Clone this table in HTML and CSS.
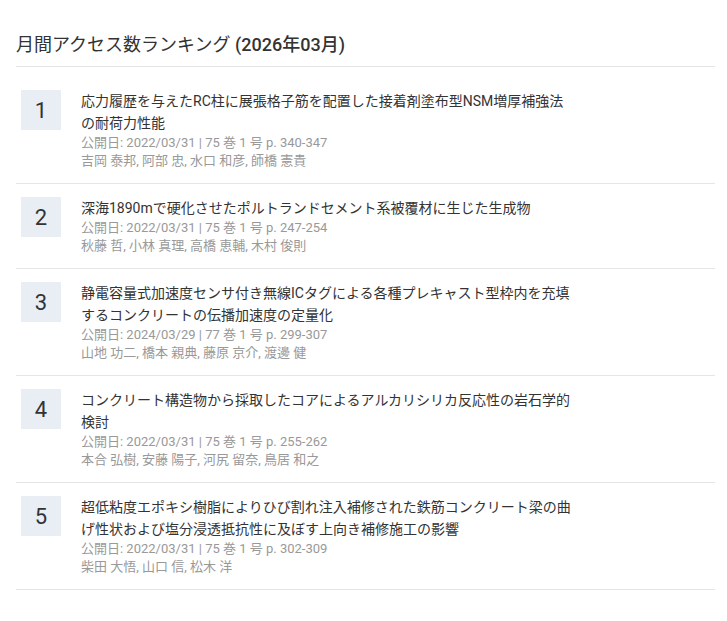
FILE: index.html
```html
<!DOCTYPE html>
<html lang="ja">
<head>
<meta charset="utf-8">
<link rel="stylesheet" href="styles.css">
</head>
<body>
<div class="ranking">
  <h2 class="ranking-title">月間アクセス数ランキング <span class="period">(2026年03月)</span></h2>
  <ol class="rank-list">
    <li class="rank-item">
      <div class="rank-num">1</div>
      <div class="rank-body">
        <div class="rank-head">応力履歴を与えたRC柱に展張格子筋を配置した接着剤塗布型NSM増厚補強法の耐荷力性能</div>
        <div class="rank-meta">公開日: 2022/03/31 | 75 巻 1 号 p. 340-347</div>
        <div class="rank-meta">吉岡 泰邦, 阿部 忠, 水口 和彦, 師橋 憲貴</div>
      </div>
    </li>
    <li class="rank-item">
      <div class="rank-num">2</div>
      <div class="rank-body">
        <div class="rank-head">深海1890mで硬化させたポルトランドセメント系被覆材に生じた生成物</div>
        <div class="rank-meta">公開日: 2022/03/31 | 75 巻 1 号 p. 247-254</div>
        <div class="rank-meta">秋藤 哲, 小林 真理, 高橋 恵輔, 木村 俊則</div>
      </div>
    </li>
    <li class="rank-item">
      <div class="rank-num">3</div>
      <div class="rank-body">
        <div class="rank-head">静電容量式加速度センサ付き無線ICタグによる各種プレキャスト型枠内を充填するコンクリートの伝播加速度の定量化</div>
        <div class="rank-meta">公開日: 2024/03/29 | 77 巻 1 号 p. 299-307</div>
        <div class="rank-meta">山地 功二, 橋本 親典, 藤原 京介, 渡邊 健</div>
      </div>
    </li>
    <li class="rank-item">
      <div class="rank-num">4</div>
      <div class="rank-body">
        <div class="rank-head">コンクリート構造物から採取したコアによるアルカリシリカ反応性の岩石学的検討</div>
        <div class="rank-meta">公開日: 2022/03/31 | 75 巻 1 号 p. 255-262</div>
        <div class="rank-meta">本合 弘樹, 安藤 陽子, 河尻 留奈, 鳥居 和之</div>
      </div>
    </li>
    <li class="rank-item">
      <div class="rank-num">5</div>
      <div class="rank-body">
        <div class="rank-head">超低粘度エポキシ樹脂によりひび割れ注入補修された鉄筋コンクリート梁の曲げ性状および塩分浸透抵抗性に及ぼす上向き補修施工の影響</div>
        <div class="rank-meta">公開日: 2022/03/31 | 75 巻 1 号 p. 302-309</div>
        <div class="rank-meta">柴田 大悟, 山口 信, 松木 洋</div>
      </div>
    </li>
  </ol>
</div>
</body>
</html>
```
FILE: styles.css
```css
html, body {
  margin: 0;
  padding: 0;
  background: #fff;
}
body {
  font-family: Roboto, "Noto Sans CJK JP", sans-serif;
  color: #333;
}
.ranking {
  padding: 0 12px 0 16px;
}
.ranking-title {
  margin: 0;
  padding: 36px 0 12px;
  font-size: 18px;
  font-weight: normal;
  line-height: 18px;
  color: #333;
  border-bottom: 1px solid #e5e5e5;
}
.period {
  font-weight: 500;
}
.rank-list {
  list-style: none;
  margin: 0;
  padding: 0;
}
.rank-item {
  display: flex;
  gap: 20px;
  padding: 23px 0 13px 5px;
  border-bottom: 1px solid #e5e5e5;
}
.rank-item + .rank-item {
  padding-top: 13px;
}
.rank-num {
  flex: none;
  width: 40px;
  height: 40px;
  background: #e8eef4;
  display: flex;
  align-items: center;
  justify-content: center;
  font-size: 22px;
  color: #333;
}
.rank-body {
  width: 492px;
}
.rank-head {
  font-size: 14px;
  line-height: 22px;
  color: #333;
}
.rank-meta {
  font-size: 13px;
  line-height: 18px;
  color: #999;
}
```
